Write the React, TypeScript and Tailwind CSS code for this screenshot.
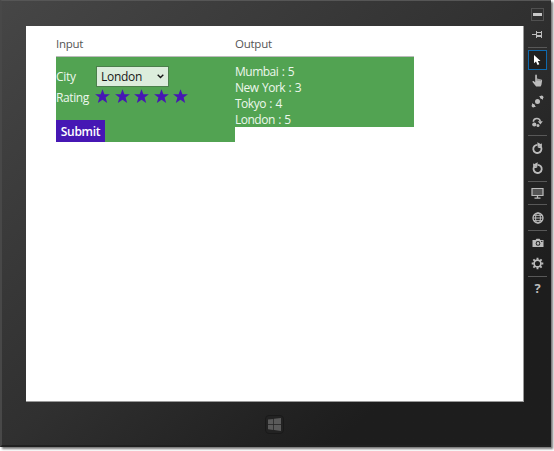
import React from "react";

const cities = [
  ["Mumbai", 5],
  ["New York", 3],
  ["Tokyo", 4],
  ["London", 5],
];

function Tool({ h = "h-5", active = false, children }: { h?: string; active?: boolean; children: React.ReactNode }) {
  return (
    <button
      className={`${h} flex w-[19px] shrink-0 items-center justify-center text-[#bcbcbc] ${active ? "border border-[#0e69ae] bg-[#202020]" : ""}`}
    >
      {children}
    </button>
  );
}

function Line({ h = "h-1.5" }: { h?: string }) {
  return (
    <div className={`${h} flex w-[19px] shrink-0 items-center`}>
      <div className="h-px w-full bg-[#585858]" />
    </div>
  );
}

function Rotate({ flip = false }: { flip?: boolean }) {
  return (
    <svg width="13" height="13" viewBox="0 0 13 13" className={flip ? "-scale-x-100" : ""}>
      <path d="M6.5 2.8A4.1 4.1 0 1 0 10.2 5.4" fill="none" stroke="currentColor" strokeWidth="1.8" />
      <path d="M6.3.2 10.6 2.6 6.8 5.4Z" fill="currentColor" />
      <path d="M10.9 1V6H6.9Z" fill="currentColor" />
    </svg>
  );
}

function Toolbar() {
  return (
    <div className="flex w-[27px] shrink-0 flex-col items-center pt-[3px]">
      <Tool>
        <span className="flex h-[13px] w-[13px] items-center justify-center border border-[#505050]">
          <span className="h-[3px] w-[9px] bg-[#c8c8c8]" />
        </span>
      </Tool>
      <Tool>
        <svg width="11" height="9" viewBox="0 0 11 9" fill="none" stroke="currentColor">
          <path d="M0 4.5h4M4.5 1v7M9.5 1v7M4.5 2.5h5" />
          <path d="M4.5 6h5" strokeWidth="2" />
        </svg>
      </Tool>
      <Line />
      <Tool active>
        <svg width="9" height="12" viewBox="0 0 9 12">
          <path d="M1 1v8.3l2-1.8 1.5 3.6 1.8-.8-1.5-3.3h2.7Z" fill="#fff" />
        </svg>
      </Tool>
      <Tool h="h-[21px]">
        <svg width="11" height="13" viewBox="0 0 11 13">
          <path d="M3.2 1.4c0-1.2 1.7-1.2 1.7 0v3.2l4.2.8c.9.2 1.1.7 1 1.4l-.7 4.1-.8 1.5H4.1L.7 8.2c-.6-.9.4-1.6 1.2-1l1.3 1Z" fill="currentColor" />
          <path d="M5.2 4.8v2M7 5v2M8.7 5.5v1.7" stroke="#555" strokeWidth=".5" />
        </svg>
      </Tool>
      <Tool h="h-[21px]">
        <svg width="13" height="13" viewBox="0 0 13 13" fill="currentColor">
          <circle cx="6.5" cy="6.5" r="2.5" />
          <circle cx="2.3" cy="10.7" r="1.7" />
          <circle cx="10.7" cy="2.3" r="1.7" />
          <path d="M1 8 5 12H1ZM8 1 12 5V1Z" />
        </svg>
      </Tool>
      <Tool>
        <svg width="11" height="11" viewBox="0 0 11 11">
          <path d="M1.3 4.7C1.6.6 7.7.2 8.3 4.4" fill="none" stroke="currentColor" strokeWidth="1.5" />
          <path d="M5.8 4.2h5L8.4 7.4Z" fill="currentColor" />
          <circle cx="2.3" cy="7.5" r="2.1" fill="currentColor" />
          <circle cx="6" cy="8.5" r="1.5" fill="currentColor" />
        </svg>
      </Tool>
      <Line />
      <Tool><Rotate /></Tool>
      <Tool><Rotate flip /></Tool>
      <Line />
      <Tool h="h-[17px]">
        <svg width="13" height="12" viewBox="0 0 13 12">
          <path d="M1 1.5h11v7H1Z" fill="#555" stroke="currentColor" strokeWidth="1.2" />
          <path d="M6.5 9v2M3.5 11.2h6" stroke="currentColor" strokeWidth="1.3" />
        </svg>
      </Tool>
      <Line h="h-[7px]" />
      <Tool h="h-[19px]">
        <svg width="12" height="12" viewBox="0 0 12 12" fill="none" stroke="currentColor">
          <circle cx="6" cy="6" r="5" strokeWidth="1.3" />
          <ellipse cx="6" cy="6" rx="2.4" ry="5" />
          <path d="M1 6h10M1.8 3.3h8.4M1.8 8.7h8.4" />
        </svg>
      </Tool>
      <Line />
      <Tool>
        <svg width="12" height="10" viewBox="0 0 12 10">
          <path d="M.5 2h3l1-1.2h3L8.4 2H11.5v7H.5Z" fill="currentColor" />
          <circle cx="6" cy="5.4" r="2.3" fill="#222" />
          <circle cx="6" cy="5.4" r="1.3" fill="currentColor" />
          <path d="M9 3.4h1.5" stroke="#222" />
        </svg>
      </Tool>
      <Tool>
        <svg width="13" height="13" viewBox="-6.5 -6.5 13 13" fill="none" stroke="currentColor">
          <circle r="3.4" strokeWidth="1.7" />
          <path d="M0-5.8v2M0 3.8v2M-5.8 0h2M3.8 0h2M-4.1-4.1l1.4 1.4M2.7 2.7l1.4 1.4M-4.1 4.1l1.4-1.4M2.7-2.7l1.4-1.4" strokeWidth="1.9" />
        </svg>
      </Tool>
      <Line />
      <Tool h="h-[19px]">
        <span className="font-['Open_Sans',sans-serif] text-[13px] leading-none font-bold">?</span>
      </Tool>
    </div>
  );
}

function Star() {
  return (
    <svg width="15" height="15" viewBox="0 0 15 15" className="shrink-0">
      <path d="M7.5.2 9.4 5.2H14.9L10.6 8.5 12.2 14 7.5 10.8 2.8 14 4.4 8.5.1 5.2H5.6Z" fill="#4617b4" />
    </svg>
  );
}

function InputPanel() {
  return (
    <div className="h-[85px] w-[179px] bg-[#52a352] text-[#edf7ed]">
      <div className="flex h-[30px] items-end">
        <span className="w-10 pb-[2px] text-[12px] leading-4 tracking-[-0.3px]">City</span>
        <button className="flex h-[21px] w-[73px] items-center justify-between border border-[#4b7f4b] bg-[#dceddc] pr-1 pl-1 text-[12px] leading-4 tracking-[-0.3px] text-[#171717]">
          London
          <svg width="7" height="5" viewBox="0 0 7 5" fill="none" stroke="currentColor" strokeWidth="1.4">
            <path d="m.7.8 2.8 2.7L6.3.8" />
          </svg>
        </button>
      </div>
      <div className="flex h-[21px] items-start">
        <span className="w-[39px] pt-[3px] text-[12px] leading-4 tracking-[-0.4px]">Rating</span>
        <div className="flex gap-[4.5px] pt-[2px]">
          <Star /><Star /><Star /><Star /><Star />
        </div>
      </div>
      <button className="mt-[12px] flex h-[22px] w-[49px] items-center justify-center bg-[#4617b4] pt-px text-[12px] leading-4 font-semibold tracking-[-0.3px] text-white">
        Submit
      </button>
    </div>
  );
}

export default function App() {
  return (
    <div className="h-[451px] w-[554px] overflow-hidden bg-white font-['Open_Sans','Noto_Sans',sans-serif]">
      <div className="flex h-[447px] w-[551px] flex-col border-t border-b-2 border-l-2 border-t-[#565656] border-b-[#202020] border-l-[#484848] bg-linear-to-br from-[#464646] via-[#303030] via-50% to-[#1d1d1d] to-80% shadow-[2px_2px_2px_#777]">
        <div className="flex h-[401px] shrink-0">
          <div className="w-6 shrink-0" />
          <main className="mt-[25px] h-[376px] w-[498px] shrink-0 border-r border-b border-[#999] bg-white pl-[30px]">
            <div className="flex h-[31px] w-[358px] border-b border-[#bbb] pt-[10px] text-[11.5px] leading-4 tracking-[-0.25px] text-[#555]">
              <div className="w-[179px]">Input</div>
              <div>Output</div>
            </div>
            <div className="flex items-start">
              <InputPanel />
              <div className="h-[70px] w-[179px] bg-[#52a352] pt-[7px] text-[12px] leading-4 tracking-[-0.5px] [word-spacing:0.8px] text-[#edf7ed]">
                {cities.map(([city, rating]) => (
                  <div key={city}>{city} : {rating}</div>
                ))}
              </div>
            </div>
          </main>
          <Toolbar />
        </div>
        <footer className="flex flex-1 items-center justify-center pt-px">
          <button className="mr-[5px] flex h-[19px] w-[19px] items-center justify-center rounded-[4px] border border-[#191919] bg-[#222]">
            <svg width="13" height="13" viewBox="0 0 13 13" className="shrink-0" fill="#5a5a5a">
              <path d="M0 1.6 5.3.9v5.2H0ZM6 .8 13 0v6.1H6ZM0 6.8h5.3V12L0 11.3ZM6 6.8h7V13l-7-.9Z" />
            </svg>
          </button>
        </footer>
      </div>
    </div>
  );
}
